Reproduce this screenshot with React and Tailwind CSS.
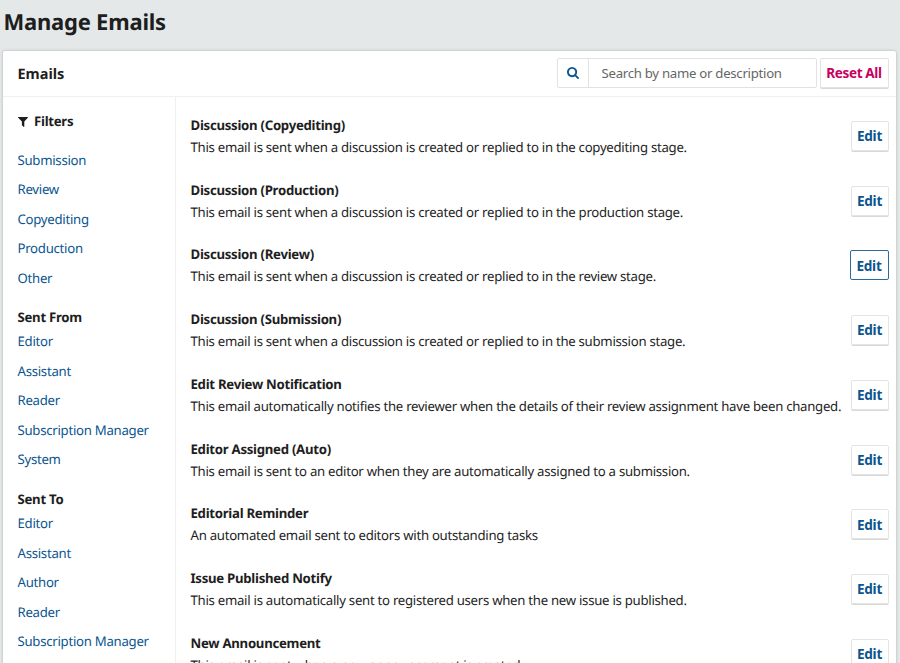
import React from "react";

const emails = [
  ["Discussion (Copyediting)", "This email is sent when a discussion is created or replied to in the copyediting stage."],
  ["Discussion (Production)", "This email is sent when a discussion is created or replied to in the production stage."],
  ["Discussion (Review)", "This email is sent when a discussion is created or replied to in the review stage."],
  ["Discussion (Submission)", "This email is sent when a discussion is created or replied to in the submission stage."],
  ["Edit Review Notification", "This email automatically notifies the reviewer when the details of their review assignment have been changed."],
  ["Editor Assigned (Auto)", "This email is sent to an editor when they are automatically assigned to a submission."],
  ["Editorial Reminder", "An automated email sent to editors with outstanding tasks"],
  ["Issue Published Notify", "This email is automatically sent to registered users when the new issue is published."],
  ["New Announcement", "This email is sent when a new announcement is created."],
];

function FilterGroup({ items }) {
  return (
    <ul>
      {items.map((item) => (
        <li key={item} className="h-[29.5px] leading-[29.5px]">
          <a className="text-[#0b5590]">{item}</a>
        </li>
      ))}
    </ul>
  );
}

export default function App() {
  return (
    <div className="h-[663px] w-[900px] overflow-hidden bg-[#e4e8e9] font-['Noto_Sans',sans-serif] text-[13.2px] tracking-[-0.275px] text-[#1e1e1e] [text-rendering:geometricPrecision]">
      <h1 className="h-[51px] pl-[3.5px] pt-[5px] text-[22px] leading-[34px] font-bold tracking-[-0.22px]">Manage Emails</h1>
      <div className="ml-[3px] h-[640px] w-[893px] rounded-[2px] bg-white shadow-[0_0_3px_rgba(0,0,0,0.25)]">
        <header className="flex h-[46px] items-center border-b border-[#f0f0f0] pr-[7.500px] pl-[14.5px]">
          <h2 className="flex-1 pt-[2px] text-[14.5px] font-bold tracking-normal">Emails</h2>
          <div className="-mt-px flex h-[30px] w-[260px] rounded-[2px] border border-[#e2e2e2]">
            <span className="flex w-[31px] items-center justify-center border-r border-[#e2e2e2] text-[#0b5590]">
              <svg viewBox="0 0 1664 1664" className="size-3" fill="currentColor">
                <path d="M1152 704q0-185-131.500-316.500T704 256 387.500 387.500 256 704t131.500 316.500T704 1152t316.500-131.500T1152 704zm512 832q0 52-38 90t-90 38q-54 0-90-38l-343-342q-179 124-399 124-143 0-273.500-55.500t-225-150-150-225T0 704t55.500-273.500 150-225 225-150T704 0t273.500 55.500 225 150 150 225T1408 704q0 220-124 399l343 343q37 37 37 90z" />
              </svg>
            </span>
            <input className="w-[220px] pt-px pl-[13px] outline-none placeholder:text-[#666666] placeholder:opacity-100" placeholder="Search by name or description" />
          </div>
          <button className="-mt-px ml-[3px] h-[30px] w-[69px] rounded-[2px] border border-[#e2e2e2] text-[13.6px] font-bold tracking-[-0.4px] whitespace-nowrap text-[#c8005f] shadow-[0_1px_0_#d8d8d8]">Reset All</button>
        </header>
        <div className="flex">
          <aside className="h-[600px] w-[173px] shrink-0 border-r border-[#f0f0f0] pl-[14.5px]">
            <h3 className="mt-[14.5px] mb-[14px] flex h-[20px] items-center font-bold">
              <svg viewBox="0 0 10 10" className="mr-[6.500px] size-[10px]" fill="currentColor">
                <path d="M.4 0h9.200q.6.300.2.800L6.300 4.500v5q-.3.700-.8.300L3.900 8.200V4.500L.2.800Q-.2.300.4 0z" />
              </svg>
              Filters
            </h3>
            <FilterGroup items={["Submission", "Review", "Copyediting", "Production", "Other"]} />
            <h3 className="mt-[14px] h-[20px] leading-[20px] font-bold">Sent From</h3>
            <FilterGroup items={["Editor", "Assistant", "Reader", "Subscription Manager", "System"]} />
            <h3 className="mt-[14.5px] h-[20px] leading-[20px] font-bold">Sent To</h3>
            <FilterGroup items={["Editor", "Assistant", "Author", "Reader", "Subscription Manager"]} />
          </aside>
          <ul className="min-w-0 flex-1 pt-[6.500px]">
            {emails.map(([title, description], index) => (
              <li key={title} className="flex h-[64.75px] items-center pr-[7.500px] pl-[14.5px]">
                <div className="min-w-0 flex-1 whitespace-nowrap">
                  <h4 className="h-[22px] leading-[22px] font-bold">{title}</h4>
                  <p className="h-[22px] leading-[22px]">{description}</p>
                </div>
                <button className={`h-[30px] shrink-0 rounded-[2px] border pt-px text-[13.6px] font-bold tracking-[-0.3px] text-[#0b5590] ${index === 2 ? "w-[39px] border-[#2c6c9c]" : "w-[38px] border-[#e4e4e4] shadow-[0_1px_0_#d8d8d8]"}`}>Edit</button>
              </li>
            ))}
          </ul>
        </div>
      </div>
    </div>
  );
}
